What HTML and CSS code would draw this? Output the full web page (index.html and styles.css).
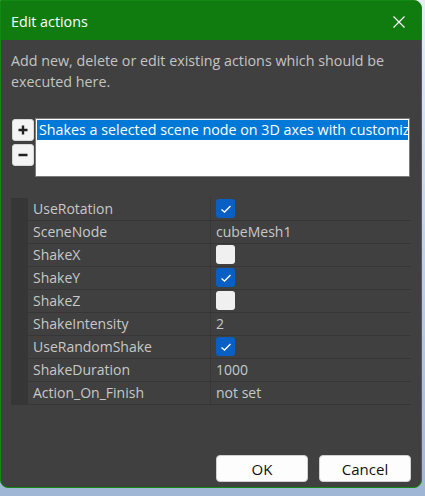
FILE: index.html
```html
<!DOCTYPE html>
<html>
<head>
<meta charset="utf-8">
<link rel="stylesheet" href="styles.css">
</head>
<body>
<div class="window">
  <div class="titlebar">
    <span class="title">Edit actions</span>
    <svg class="close" width="12" height="12" viewBox="0 0 12 12"><path d="M0.5 0.5 L11.5 11.5 M11.5 0.5 L0.5 11.5" stroke="#fff" stroke-width="1.2" fill="none"/></svg>
  </div>
  <div class="content">
    <p class="desc">Add new, delete or edit existing actions which should be executed here.</p>
    <div class="listarea">
      <div class="tools">
        <div class="tbtn"><svg width="12" height="12" viewBox="0 0 12 12"><path d="M6 1.5 V10.5 M1.5 6 H10.5" stroke="#222" stroke-width="2.4"/></svg></div>
        <div class="tbtn"><svg width="12" height="12" viewBox="0 0 12 12"><path d="M1.5 6 H10.5" stroke="#222" stroke-width="2.4"/></svg></div>
      </div>
      <div class="listbox">
        <div class="item sel">Shakes a selected scene node on 3D axes with customizable intensity</div>
      </div>
    </div>
    <div class="grid">
      <div class="row"><div class="margin"></div><div class="name">UseRotation</div><div class="val"><span class="cb on"><svg width="12" height="10" viewBox="0 0 12 10"><path d="M1.5 5.5 L4.5 8 L10.5 2" stroke="#fff" stroke-width="1.3" fill="none"/></svg></span></div></div>
      <div class="row"><div class="margin"></div><div class="name">SceneNode</div><div class="val">cubeMesh1</div></div>
      <div class="row"><div class="margin"></div><div class="name">ShakeX</div><div class="val"><span class="cb"></span></div></div>
      <div class="row"><div class="margin"></div><div class="name">ShakeY</div><div class="val"><span class="cb on"><svg width="12" height="10" viewBox="0 0 12 10"><path d="M1.5 5.5 L4.5 8 L10.5 2" stroke="#fff" stroke-width="1.3" fill="none"/></svg></span></div></div>
      <div class="row"><div class="margin"></div><div class="name">ShakeZ</div><div class="val"><span class="cb"></span></div></div>
      <div class="row"><div class="margin"></div><div class="name">ShakeIntensity</div><div class="val">2</div></div>
      <div class="row"><div class="margin"></div><div class="name">UseRandomShake</div><div class="val"><span class="cb on"><svg width="12" height="10" viewBox="0 0 12 10"><path d="M1.5 5.5 L4.5 8 L10.5 2" stroke="#fff" stroke-width="1.3" fill="none"/></svg></span></div></div>
      <div class="row"><div class="margin"></div><div class="name">ShakeDuration</div><div class="val">1000</div></div>
      <div class="row"><div class="margin"></div><div class="name">Action_On_Finish</div><div class="val">not set</div></div>
    </div>
    <div class="buttons">
      <button class="btn">OK</button>
      <button class="btn">Cancel</button>
    </div>
  </div>
</div>
</body>
</html>
```
FILE: styles.css
```css
html, body {
  margin: 0;
  padding: 0;
}
body {
  width: 425px;
  height: 496px;
  background: linear-gradient(180deg, #e8eef6 0%, #b9cce3 60%, #9fb6d4 100%);
  font-family: "Open Sans", "Noto Sans", sans-serif;
  overflow: hidden;
}
.window {
  width: 422px;
  height: 488px;
  box-sizing: border-box;
  border: 1px solid #128a12;
  border-radius: 0 8px 8px 8px;
  background: #404040;
  display: flex;
  flex-direction: column;
  overflow: hidden;
}
.titlebar {
  height: 39px;
  flex: none;
  background: #107c10;
  display: flex;
  align-items: center;
  justify-content: space-between;
  padding: 0 16px 0 10px;
}
.title {
  color: #fff;
  font-size: 14.3px;
  margin-top: 1px;
}
.close {
  display: block;
  margin-top: 2px;
}
.content {
  flex: 1;
  display: flex;
  flex-direction: column;
  padding: 0 10px 0 10px;
}
.desc {
  margin: 10px 0 0 0;
  color: #c4c4c4;
  font-size: 14.3px;
  line-height: 21px;
}
.listarea {
  display: flex;
  margin-top: 26px;
  gap: 1px;
}
.tools {
  display: flex;
  flex-direction: column;
  gap: 3px;
  padding-top: 1px;
  margin-left: 1px;
}
.tbtn {
  width: 22px;
  height: 22px;
  box-sizing: border-box;
  background: #f4f4f4;
  border: 1px solid #d8d8d8;
  border-radius: 3px;
  display: flex;
  align-items: center;
  justify-content: center;
}
.listbox {
  width: 375px;
  height: 59px;
  box-sizing: border-box;
  background: #fff;
  border: 1px solid #7a7a7a;
  padding: 1px 1px;
  overflow: hidden;
}
.item {
  height: 20px;
  line-height: 20px;
  font-size: 14.3px;
  white-space: nowrap;
  overflow: hidden;
  padding-left: 2px;
}
.item.sel {
  background: #0078d7;
  color: #fff;
}
.grid {
  margin-top: 21px;
  width: 400px;
  display: flex;
  flex-direction: column;
}
.row {
  display: flex;
  height: 23px;
  box-sizing: border-box;
  border-bottom: 1px solid #363636;
}
.margin {
  width: 17px;
  flex: none;
  background: #363636;
}
.name {
  width: 183px;
  flex: none;
  padding-left: 5px;
  box-sizing: border-box;
  border-right: 1px solid #383838;
  color: #c8c8c8;
  font-size: 14px;
  line-height: 22px;
}
.val {
  flex: 1;
  padding-left: 5px;
  color: #c8c8c8;
  font-size: 14px;
  line-height: 22px;
  display: flex;
  align-items: flex-start;
}
.cb {
  width: 19px;
  height: 19px;
  margin-top: 1px;
  border-radius: 3px;
  background: #f0f0f0;
  display: flex;
  align-items: center;
  justify-content: center;
}
.cb.on {
  background: #0a5fc4;
}
.buttons {
  margin-top: auto;
  margin-bottom: 5px;
  display: flex;
  justify-content: flex-end;
  gap: 11px;
  padding-right: 0;
}
.btn {
  width: 92px;
  height: 27px;
  background: #fdfdfd;
  border: 1px solid #d0d0d0;
  border-radius: 4px;
  font-family: "Open Sans", "Noto Sans", sans-serif;
  font-size: 15px;
  color: #111;
  padding: 0;
}
```
